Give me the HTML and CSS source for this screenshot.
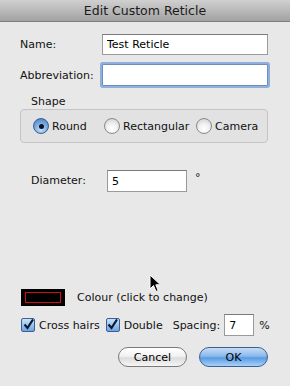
FILE: index.html
```html
<!DOCTYPE html>
<html lang="en">
<head>
    <meta charset="UTF-8">
    <title>Edit Custom Reticle</title>
    <link rel="stylesheet" href="styles.css">
</head>
<body>
    <div class="window">
        <div class="titlebar">Edit Custom Reticle</div>

        <div class="content">
            <!-- Name and abbreviation -->
            <div class="fields">
                <label for="name">Name:</label>
                <input type="text" id="name" class="field" value="Test Reticle">
                <label for="abbr">Abbreviation:</label>
                <input type="text" id="abbr" class="field focused">
            </div>

            <!-- Shape group -->
            <div class="group-title">Shape</div>
            <div class="group">
                <div class="radio-item first"><span class="radio checked"></span><span class="radio-label">Round</span></div>
                <div class="radio-item second"><span class="radio"></span><span class="radio-label">Rectangular</span></div>
                <div class="radio-item"><span class="radio"></span><span class="radio-label">Camera</span></div>
            </div>

            <div class="diameter">
                <label for="diameter">Diameter:</label>
                <input type="text" id="diameter" class="field small" value="5">
                <span class="unit">°</span>
            </div>

            <div class="spacer"></div>

            <!-- Colour -->
            <div class="colour-row">
                <span class="swatch"><span class="swatch-inner"></span></span>
                <span>Colour (click to change)</span>
            </div>

            <div class="options">
                <span class="check"><svg width="11" height="11" viewBox="0 0 11 11"><path d="M1.5 5.5 L4.5 9 L10 0.5" fill="none" stroke="#0a1a33" stroke-width="2.2"/></svg></span>
                <span class="opt-label cross">Cross hairs</span>
                <span class="check"><svg width="11" height="11" viewBox="0 0 11 11"><path d="M1.5 5.5 L4.5 9 L10 0.5" fill="none" stroke="#0a1a33" stroke-width="2.2"/></svg></span>
                <span class="opt-label double">Double</span>
                <span class="opt-label spacing">Spacing:</span>
                <input type="text" class="field tiny" value="7">
                <span>%</span>
            </div>

            <div class="buttons">
                <button class="btn">Cancel</button>
                <button class="btn default">OK</button>
            </div>
        </div>

        <!-- Mouse pointer captured in the screenshot -->
        <svg class="pointer" width="14" height="20" viewBox="0 0 14 20">
            <path d="M1 1 L1 15 L4.5 11.5 L7 17.5 L9.2 16.5 L6.8 10.8 L11.5 10.8 Z" fill="#000" stroke="#fff" stroke-width="1"/>
        </svg>
    </div>
</body>
</html>
```

FILE: styles.css
```css
/* Общие настройки */
body {
    margin: 0;
    padding: 0;
    font-family: "DejaVu Sans", Arial, sans-serif;
    font-size: 11px;
    color: #111;
    background: #e8e8e8;
}

.window {
    position: relative;
    width: 290px;
    height: 386px;
    display: flex;
    flex-direction: column;
    background: #e8e8e8;
}

/* Заголовок окна */
.titlebar {
    height: 21px;
    line-height: 22px;
    text-align: center;
    font-size: 12.5px;
    color: #1a1a1a;
    background: linear-gradient(#d0d0d0, #a2a2a2);
    border-bottom: 1px solid #7e7e7e;
}

.content {
    flex: 1;
    display: flex;
    flex-direction: column;
    padding: 12px 22px 0 20px;
}

/* Поля ввода */
.fields {
    display: grid;
    grid-template-columns: 82px 166px;
    row-gap: 9px;
    align-items: center;
}

.field {
    box-sizing: border-box;
    height: 21px;
    padding: 0 4px;
    font-family: inherit;
    font-size: 11px;
    color: #000;
    background: #fff;
    border: 1px solid #9a9a9a;
    border-top-color: #7a7a7a;
    outline: none;
    margin: 0;
}

.field.focused {
    height: 22px;
    border: 1px solid #6e8fbd;
    box-shadow: 0 0 0 2px #8fb0dc;
    border-radius: 1px;
}

/* Группа переключателей */
.group-title {
    margin: 10px 0 0 11px;
    height: 12px;
    line-height: 12px;
}

.group {
    box-sizing: border-box;
    height: 34px;
    margin-top: 1px;
    display: flex;
    align-items: center;
    padding-left: 12px;
    background: #e2e2e2;
    border: 1px solid #c4c4c4;
    border-radius: 4px;
}

.radio-item {
    display: flex;
    align-items: center;
    white-space: nowrap;
}

.radio-item.first {
    width: 71px;
}

.radio-item.second {
    width: 92px;
}

.radio {
    box-sizing: border-box;
    width: 16px;
    height: 16px;
    border-radius: 50%;
    border: 1px solid #8a8a8a;
    background: radial-gradient(circle at 50% 70%, #ffffff 0, #f2f2f2 40%, #c9c9c9 100%);
    display: flex;
    align-items: center;
    justify-content: center;
}

.radio.checked {
    border-color: #3b5f92;
    background: radial-gradient(circle at 50% 75%, #c9e2fb 0, #7fb0e6 45%, #3f77bf 100%);
}

.radio.checked::after {
    content: "";
    width: 5px;
    height: 5px;
    border-radius: 50%;
    background: #0c1420;
}

.radio-label {
    margin-left: 3px;
}

/* Диаметр */
.diameter {
    display: flex;
    align-items: flex-start;
    margin: 27px 0 0 11px;
}

.diameter label {
    width: 76px;
    line-height: 22px;
}

.field.small {
    width: 80px;
    height: 22px;
}

.unit {
    margin-left: 8px;
    line-height: 16px;
}

.spacer {
    flex: 1;
}

/* Цвет */
.colour-row {
    display: flex;
    align-items: center;
    gap: 12px;
    height: 17px;
    margin-left: 1px;
}

.swatch {
    box-sizing: border-box;
    width: 44px;
    height: 17px;
    background: #000;
    padding: 3px 4px;
    display: flex;
}

.swatch-inner {
    flex: 1;
    border: 1px solid #d01010;
}

/* Флажки */
.options {
    display: flex;
    align-items: center;
    height: 22px;
    margin-top: 8px;
    margin-left: 1px;
    white-space: nowrap;
}

.check {
    box-sizing: border-box;
    width: 14px;
    height: 14px;
    flex-shrink: 0;
    border: 1px solid #3b5f92;
    border-radius: 2px;
    background: linear-gradient(#c9e2fb, #6ea4e0);
    display: flex;
    align-items: flex-end;
    justify-content: center;
    overflow: visible;
}

.check svg {
    margin-bottom: 1px;
}

.opt-label {
    margin-left: 4px;
}

.opt-label.cross {
    margin-right: 6px;
}

.opt-label.double {
    margin-right: 10px;
}

.opt-label.spacing {
    margin: 0 4px 0 0;
}

.field.tiny {
    width: 30px;
    height: 22px;
    margin-right: 5px;
}

/* Кнопки */
.buttons {
    display: flex;
    justify-content: flex-end;
    gap: 12px;
    margin: 11px 0 19px;
}

.btn {
    box-sizing: border-box;
    width: 69px;
    height: 20px;
    padding: 0;
    font-family: inherit;
    font-size: 11px;
    color: #000;
    border-radius: 10px;
    border: 1px solid #7a7a7a;
    background: linear-gradient(#ffffff 0, #f2f2f2 45%, #dcdcdc 55%, #f6f6f6 100%);
}

.btn.default {
    border-color: #3d5f8f;
    background: linear-gradient(#c6ddf7 0, #8ab9ec 45%, #5b9be2 55%, #a6d2fa 100%);
}

/* Указатель мыши */
.pointer {
    position: absolute;
    left: 149px;
    top: 274px;
}
```
